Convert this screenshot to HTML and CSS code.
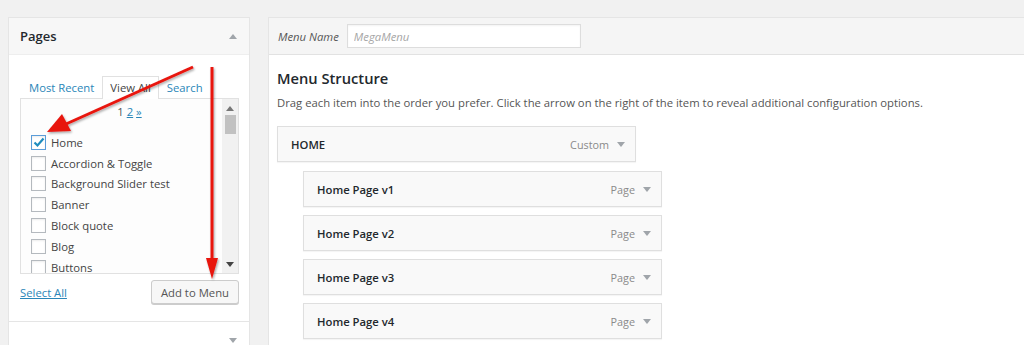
FILE: index.html
```html
<!DOCTYPE html>
<html lang="en">
<head>
  <meta charset="UTF-8" />
  <title>Menus</title>
  <link rel="stylesheet" href="styles.css">
</head>
<body>
  <div class="wrap">
    <div class="side">
      <div class="box-head">
        <span class="box-title">Pages</span>
        <span class="tri up"></span>
      </div>
      <div class="box-body">
        <div class="tabs">
          <a class="tab">Most Recent</a>
          <a class="tab active">View All</a>
          <a class="tab">Search</a>
        </div>
        <div class="list">
          <div class="list-inner">
            <div class="pager">1 <a>2</a> <a>&raquo;</a></div>
            <label class="check"><span class="cb on"><svg width="12" height="12" viewBox="0 0 12 12"><path d="M1.5 6.5 L4.5 9.5 L10.5 2.5" fill="none" stroke="#1e8cbe" stroke-width="2.2"/></svg></span>Home</label>
            <label class="check"><span class="cb"></span>Accordion &amp; Toggle</label>
            <label class="check"><span class="cb"></span>Background Slider test</label>
            <label class="check"><span class="cb"></span>Banner</label>
            <label class="check"><span class="cb"></span>Block quote</label>
            <label class="check"><span class="cb"></span>Blog</label>
            <label class="check"><span class="cb"></span>Buttons</label>
          </div>
          <div class="scroll">
            <span class="tri sm up"></span>
            <span class="thumb"></span>
            <span class="tri sm down"></span>
          </div>
        </div>
        <div class="actions">
          <a class="select-all">Select All</a>
          <button class="btn">Add to Menu</button>
        </div>
      </div>
      <div class="box-head next">
        <span class="box-title"></span>
        <span class="tri down"></span>
      </div>
    </div>

    <div class="main">
      <div class="main-head">
        <span class="name-label">Menu Name</span>
        <input class="name-input" type="text" placeholder="MegaMenu">
      </div>
      <div class="main-body">
        <h3>Menu Structure</h3>
        <p class="desc">Drag each item into the order you prefer. Click the arrow on the right of the item to reveal additional configuration options.</p>
        <div class="items">
          <div class="item top"><b>HOME</b><span class="type">Custom</span><span class="tri down"></span></div>
          <div class="item sub"><b>Home Page v1</b><span class="type">Page</span><span class="tri down"></span></div>
          <div class="item sub"><b>Home Page v2</b><span class="type">Page</span><span class="tri down"></span></div>
          <div class="item sub"><b>Home Page v3</b><span class="type">Page</span><span class="tri down"></span></div>
          <div class="item sub"><b>Home Page v4</b><span class="type">Page</span><span class="tri down"></span></div>
        </div>
      </div>
    </div>
  </div>

  <svg class="arrows" width="1024" height="345" viewBox="0 0 1024 345">
    <defs>
      <filter id="sh" x="-20%" y="-20%" width="140%" height="140%">
        <feDropShadow dx="1" dy="1.5" stdDeviation="1.2" flood-color="#000" flood-opacity="0.35"/>
      </filter>
    </defs>
    <g filter="url(#sh)" fill="#e8140f" stroke="#e8140f">
      <line x1="193" y1="67" x2="66" y2="124" stroke-width="3"/>
      <polygon points="47,132 62,114 71,131" stroke="none"/>
      <line x1="212" y1="67" x2="212" y2="260" stroke-width="3"/>
      <polygon points="206,258 218,258 212,279" stroke="none"/>
    </g>
  </svg>
</body>
</html>
```

FILE: styles.css
```css
* {
  margin: 0;
  padding: 0;
  box-sizing: border-box;
}
body {
  background: #f1f1f1;
  font-family: 'Open Sans', sans-serif;
  font-size: 11.3px;
  color: #444;
  overflow: hidden;
  height: 345px;
  position: relative;
}

.wrap {
  display: flex;
  gap: 18px;
  padding: 17px 0 0 8px;
  height: 345px;
  overflow: hidden;
}

/* left column */
.side {
  width: 242px;
  flex-shrink: 0;
  background: #fff;
  border: 1px solid #e5e5e5;
  border-bottom: none;
}
.box-head {
  height: 37px;
  padding: 0 12px 0 11px;
  display: flex;
  align-items: center;
  justify-content: space-between;
  background: #f7f7f7;
  border-bottom: 1px solid #eee;
}
.box-head.next {
  border-top: 1px solid #e5e5e5;
  border-bottom: none;
  background: #fff;
  height: 24px;
  align-items: flex-end;
  padding-bottom: 2px;
}
.box-title {
  font-size: 13px;
  font-weight: 600;
  color: #23282d;
}
.tri {
  width: 0;
  height: 0;
  border-left: 4px solid transparent;
  border-right: 4px solid transparent;
}
.tri.up { border-bottom: 5px solid #a0a5aa; }
.tri.down { border-top: 5px solid #a0a5aa; }
.tri.sm.up { border-bottom-color: #777; }
.tri.sm.down { border-top-color: #444; }

.box-body {
  padding: 21px 10px 17px 11px;
}
.tabs {
  display: flex;
  padding-left: 1px;
  position: relative;
  z-index: 1;
}
.tab {
  color: #2a86b8;
  padding: 3px 7px 2px;
  border: 1px solid transparent;
  border-bottom: none;
  line-height: 16px;
}
.tab.active {
  color: #444;
  background: #fff;
  border-color: #e1e1e1;
  margin-bottom: -1px;
  padding-bottom: 3px;
}
.list {
  height: 176px;
  border: 1px solid #e1e1e1;
  background: #fdfdfd;
  display: flex;
  overflow: hidden;
}
.list-inner {
  flex: 1;
  padding: 4px 0 0 10px;
}
.pager {
  text-align: center;
  padding-left: 6px;
  height: 29px;
  line-height: 18px;
  color: #555;
}
.pager a {
  color: #2a86b8;
  text-decoration: underline;
}
.check {
  display: flex;
  align-items: center;
  gap: 5px;
  height: 20.8px;
  color: #444;
}
.cb {
  width: 15px;
  height: 15px;
  border: 1px solid #b4b9be;
  background: #fff;
  display: flex;
  align-items: center;
  justify-content: center;
  box-shadow: inset 0 1px 2px rgba(0,0,0,0.08);
}
.cb.on {
  border-color: #5b9dd9;
}
.scroll {
  width: 16px;
  background: #f1f1f1;
  display: flex;
  flex-direction: column;
  align-items: center;
  padding: 7px 0 6px;
}
.thumb {
  width: 11px;
  height: 19px;
  background: #c1c1c1;
  margin-top: 4px;
  flex: none;
}
.scroll .down {
  margin-top: auto;
}
.actions {
  display: flex;
  justify-content: space-between;
  align-items: center;
  padding-top: 6px;
}
.select-all {
  color: #2a86b8;
  text-decoration: underline;
}
.btn {
  font-family: 'Open Sans', sans-serif;
  font-size: 11.3px;
  color: #555;
  background: #f7f7f7;
  border: 1px solid #ccc;
  border-radius: 3px;
  height: 24px;
  padding: 0 9px;
  box-shadow: 0 1px 0 #ccc;
}

/* right column */
.main {
  flex: 1;
  margin-right: -20px;
  background: #fff;
  border: 1px solid #e5e5e5;
  border-bottom: none;
}
.main-head {
  height: 37px;
  background: #f5f5f5;
  border-bottom: 1px solid #e2e2e2;
  display: flex;
  align-items: center;
  padding-left: 9px;
  gap: 8px;
}
.name-label {
  font-style: italic;
  font-size: 11.3px;
  color: #555;
}
.name-input {
  width: 234px;
  height: 24px;
  border: 1px solid #ddd;
  background: #fff;
  font-family: 'Open Sans', sans-serif;
  font-style: italic;
  font-size: 11.3px;
  padding: 0 6px;
  box-shadow: inset 0 1px 2px rgba(0,0,0,0.05);
}
.name-input::placeholder {
  color: #a6a6a6;
}
.main-body {
  padding: 12px 8px 0;
}
.main-body h3 {
  font-size: 14.7px;
  font-weight: 600;
  color: #23282d;
  line-height: 22px;
}
.desc {
  margin-top: 4px;
  line-height: 20px;
  color: #555;
}
.items {
  margin-top: 13px;
  display: flex;
  flex-direction: column;
  gap: 8px;
}
.item {
  width: 359px;
  height: 36px;
  background: #f9f9f9;
  border: 1px solid #dfdfdf;
  display: flex;
  align-items: center;
  padding: 0 10px 0 13px;
  box-shadow: 0 1px 1px rgba(0,0,0,0.04);
}
.item.top {
  margin-bottom: 1px;
}
.item.sub {
  margin-left: 26px;
}
.item b {
  font-weight: 600;
  color: #23282d;
  flex: 1;
}
.item .type {
  color: #8a8a8a;
  font-size: 10.8px;
  margin-right: 8px;
}
.item .tri.down {
  border-top-color: #a0a5aa;
}

.arrows {
  position: absolute;
  left: 0;
  top: 0;
  z-index: 10;
  pointer-events: none;
}
```
